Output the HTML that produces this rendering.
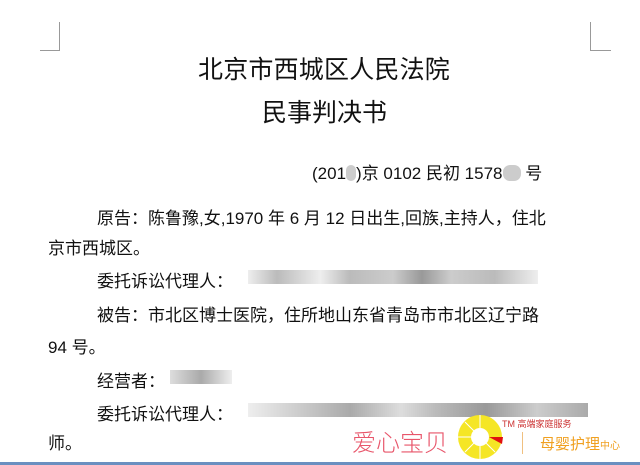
<!DOCTYPE html>
<html><head><meta charset="utf-8"><style>
body{margin:0;width:640px;height:465px;background:#fff;position:relative;overflow:hidden;font-family:"Liberation Sans","Noto Sans CJK SC",sans-serif;color:#111}
.a{position:absolute;white-space:nowrap}
.t{font-size:17px}
.b{position:absolute;height:14px}
</style></head><body>
<div class="a" style="left:59px;top:22px;width:1px;height:29px;background:#999"></div>
<div class="a" style="left:40px;top:50px;width:20px;height:1px;background:#999"></div>
<div class="a" style="left:590px;top:22px;width:1px;height:29px;background:#999"></div>
<div class="a" style="left:590px;top:50px;width:21px;height:1px;background:#999"></div>

<div class="a" style="left:198px;top:50px;font-size:25px;letter-spacing:0.2px">北京市西城区人民法院</div>
<div class="a" style="left:262px;top:93px;font-size:25px">民事判决书</div>

<div class="a t" style="left:312px;top:159px">(201<span style="display:inline-block;width:10px;height:16px;background:#ccc;border-radius:5px;vertical-align:-2px"></span>)京 0102 民初 1578<span style="display:inline-block;width:18px;height:16px;background:#ccc;border-radius:7px;vertical-align:-2px"></span> 号</div>

<div class="a t" style="left:97px;top:204px">原告：陈鲁豫,女,1970 年 6 月 12 日出生,回族,主持人，住北</div>
<div class="a t" style="left:48px;top:234px">京市西城区。</div>
<div class="a t" style="left:97px;top:267px">委托诉讼代理人：</div>
<div class="b" style="left:248px;top:270px;width:290px;background:linear-gradient(90deg,#eee,#bbb 10%,#ddd 20%,#eee 25%,#bbb 35%,#ccc 50%,#999 60%,#ccc 70%,#bbb 85%,#eee)"></div>
<div class="a t" style="left:97px;top:301px">被告：市北区博士医院，住所地山东省青岛市市北区辽宁路</div>
<div class="a t" style="left:48px;top:333px">94 号。</div>
<div class="a t" style="left:97px;top:367px">经营者：</div>
<div class="b" style="left:170px;top:370px;width:62px;background:linear-gradient(90deg,#ddd,#aaa,#eee)"></div>
<div class="a t" style="left:97px;top:400px">委托诉讼代理人：</div>
<div class="b" style="left:248px;top:403px;width:340px;background:linear-gradient(90deg,#eee,#ccc 15%,#aaa 30%,#ddd 45%,#bbb 55%,#999 70%,#ccc 85%,#aaa)"></div>
<div class="a t" style="left:48px;top:429px">师。</div>

<div class="a" style="left:352px;top:423px;font-size:24px;color:#e8556a;font-weight:300">爱心宝贝</div>
<svg class="a" style="left:457px;top:414px" width="46" height="46" viewBox="0 0 46 46"><circle cx="23" cy="23" r="22" fill="#f5e625"/><circle cx="23" cy="23" r="9" fill="#fff"/><g stroke="#fff" stroke-width="1"><line x1="23" y1="1" x2="23" y2="14"/><line x1="1" y1="23" x2="14" y2="23"/><line x1="8" y1="8" x2="17" y2="17"/><line x1="8" y1="38" x2="17" y2="29"/><line x1="23" y1="45" x2="23" y2="32"/><line x1="38" y1="38" x2="29" y2="29"/></g><path d="M32 23 L46 23 L45 30 Z" fill="#e01010"/></svg>
<div class="a" style="left:502px;top:417px;font-size:9px;color:#c33">TM 高端家庭服务</div>
<div class="a" style="left:522px;top:432px;width:1px;height:22px;background:#f0c080"></div>
<div class="a" style="left:540px;top:433px;font-size:15px;color:#f0a020">母婴护理<span style="font-size:10px">中心</span></div>
<div class="a" style="left:0;top:462px;width:640px;height:3px;background:#6a8fc0"></div>
</body></html>
